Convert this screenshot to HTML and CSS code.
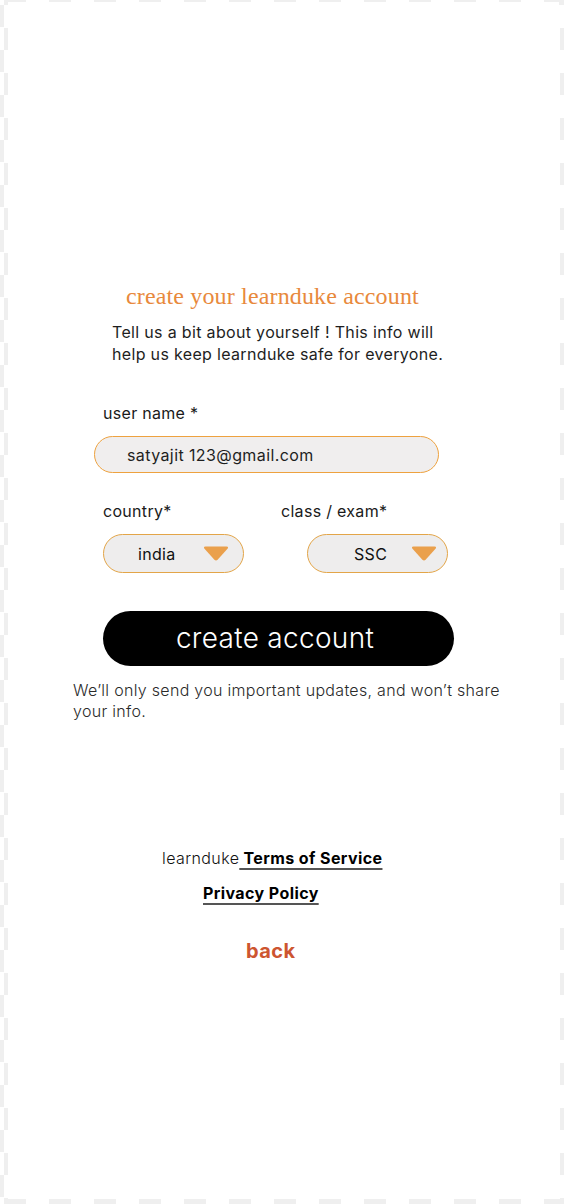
FILE: index.html
```html
<!DOCTYPE html>
<html lang="en">
<head>
<meta charset="utf-8">
<title>create your learnduke account</title>
<link rel="stylesheet" href="styles.css">
</head>
<body>
<div class="frame">
  <main class="signup">
    <h1 class="title">create your learnduke account</h1>
    <p class="intro">Tell us a bit about yourself ! This info will<br>help us keep learnduke safe for everyone.</p>

    <div class="field">
      <div class="label label-user">user name *</div>
      <div class="input">satyajit 123@gmail.com</div>
    </div>

    <div class="row">
      <div class="col col-country">
        <div class="label">country*</div>
        <div class="select select-country">
          <span class="select-value">india</span>
          <svg class="caret" width="26" height="15" viewBox="0 0 26 15"><path d="M2.5 0.5 H23.5 Q26 0.5 24.5 2.8 L14.6 13.8 Q13 15.4 11.4 13.8 L1.5 2.8 Q0 0.5 2.5 0.5 Z" fill="#eaa04c"/></svg>
        </div>
      </div>
      <div class="col col-class">
        <div class="label">class / exam*</div>
        <div class="select select-class">
          <span class="select-value">SSC</span>
          <svg class="caret" width="26" height="15" viewBox="0 0 26 15"><path d="M2.5 0.5 H23.5 Q26 0.5 24.5 2.8 L14.6 13.8 Q13 15.4 11.4 13.8 L1.5 2.8 Q0 0.5 2.5 0.5 Z" fill="#eaa04c"/></svg>
        </div>
      </div>
    </div>

    <button class="cta" type="button">create account</button>
    <p class="note">We’ll only send you important updates, and won’t share<br>your info.</p>
  </main>

  <footer class="legal">
    <div class="legal-line legal-terms">learnduke<a class="legal-link" href="#"> Terms of Service</a></div>
    <div class="legal-line legal-privacy"><a class="legal-link" href="#">Privacy Policy</a></div>
    <div class="back"><a class="back-link" href="#">back</a></div>
  </footer>
</div>
</body>
</html>
```

FILE: styles.css
```css
html, body {
  margin: 0;
  padding: 0;
}

body {
  font-family: Inter, "Noto Sans", sans-serif;
  color: #1c1c1c;
  background: #ffffff;
}

.frame {
  width: 564px;
  min-height: 1204px;
  overflow: hidden;
  background-image:
    repeating-linear-gradient(to bottom, #efefef 0 22.5px, transparent 22.5px 45px),
    repeating-linear-gradient(to bottom, #efefef 0 22.5px, transparent 22.5px 45px),
    repeating-linear-gradient(to bottom, #efefef 0 22.5px, transparent 22.5px 45px),
    repeating-linear-gradient(to right, #efefef 0 22.5px, transparent 22.5px 45px),
    repeating-linear-gradient(to right, #efefef 0 22.5px, transparent 22.5px 45px),
    linear-gradient(#efefef, #efefef),
    linear-gradient(#efefef, #efefef);
  background-size: 4px 1200px, 4px 1200px, 4px 1200px, 560px 2px, 560px 5px, 4px 5px, 5px 5px;
  background-position: 0 5px, 4px 28px, 560px 28px, 4px 0, 4px 1199px, 4px 0, 559px 0;
  background-repeat: no-repeat;
}

.signup {
  padding-top: 284px;
}

.title {
  margin: 0 0 0 126px;
  font-family: "Liberation Serif", "DejaVu Serif", serif;
  font-weight: 400;
  font-size: 24px;
  line-height: 24px;
  letter-spacing: 0.15px;
  color: #e8893c;
}

.intro {
  margin: 14px 0 0 112px;
  font-size: 16px;
  line-height: 21.5px;
  letter-spacing: 0.33px;
  color: #1e1e1e;
}

.field {
  margin-top: 38px;
}

.label {
  font-size: 16px;
  line-height: 21px;
  letter-spacing: 0.3px;
  color: #1a1a1a;
}

.label-user {
  margin-left: 103px;
}

.input {
  box-sizing: border-box;
  margin: 12px 0 0 94px;
  width: 345px;
  height: 37px;
  display: flex;
  align-items: center;
  padding-left: 32px;
  border: 1.5px solid #eea23f;
  border-radius: 19px;
  background: #f0eeee;
  font-size: 16px;
  letter-spacing: 0.4px;
  color: #1e1e1e;
}

.row {
  margin-top: 28px;
  display: flex;
}

.col-country {
  margin-left: 103px;
  width: 178px;
}

.select {
  box-sizing: border-box;
  margin-top: 12px;
  width: 141px;
  height: 39px;
  display: flex;
  align-items: center;
  justify-content: space-between;
  border: 1.5px solid #e3a548;
  border-radius: 20px;
  background: #eeeded;
  font-size: 16px;
  letter-spacing: 0.3px;
  color: #111;
}

.select-country {
  padding: 0 14px 0 34px;
}

.select-class {
  margin-left: 26px;
  padding: 0 10px 0 46px;
}

.caret {
  display: block;
}

.cta {
  display: flex;
  align-items: center;
  justify-content: center;
  margin: 38px 0 0 103px;
  width: 351px;
  height: 55px;
  border: 0;
  border-radius: 28px;
  background: #000;
  color: #fff;
  font-family: Inter, "Noto Sans", sans-serif;
  font-weight: 300;
  font-size: 28px;
  padding: 0 7px 2px 0;
  letter-spacing: 0.3px;
}

.note {
  margin: 14px 0 0 73px;
  font-size: 16px;
  font-weight: 300;
  line-height: 21px;
  letter-spacing: 0.3px;
  color: #2a2a2a;
}

.legal {
  margin-top: 126px;
  font-size: 16px;
  line-height: 21px;
  letter-spacing: 0.4px;
}

.legal-line {
  color: #111;
}

.legal-terms {
  margin-left: 162px;
  font-weight: 300;
}

.legal-privacy {
  margin: 14px 0 0 203px;
}

.legal-link {
  font-weight: 700;
  color: #000;
  text-decoration: underline;
  text-decoration-color: #555;
  text-decoration-thickness: 1.5px;
  text-underline-offset: 4px;
}

.back {
  margin: 35px 0 0 246px;
  font-size: 20px;
  line-height: 24px;
  font-weight: 700;
}

.back-link {
  color: #cd5530;
  text-decoration: none;
}
```
